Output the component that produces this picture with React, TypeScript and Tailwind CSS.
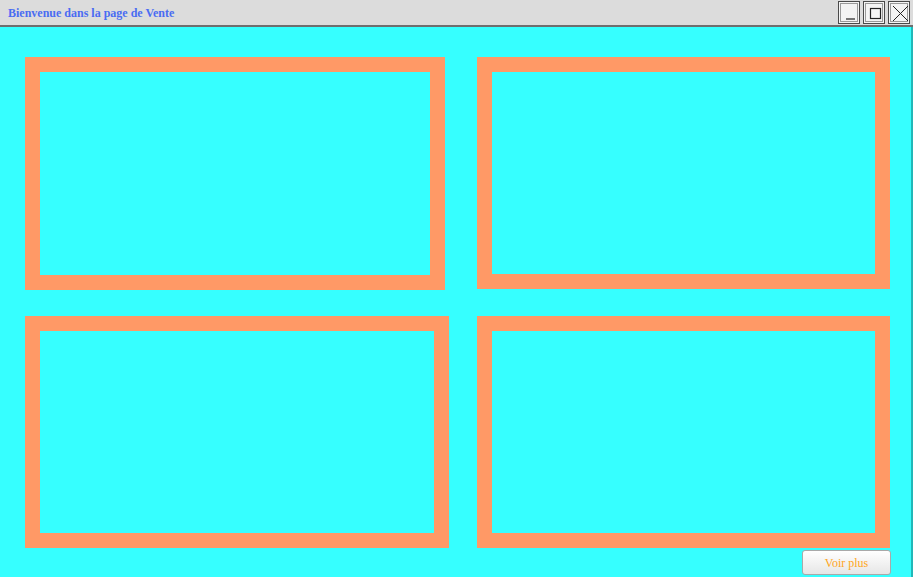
// Page de vente - fenêtre avec quatre cadres
export default function App() {
  const serif = { fontFamily: '"Liberation Serif", "Times New Roman", serif' };

  return (
    <div className="w-[913px] h-[577px] overflow-hidden bg-[#36ffff] flex flex-col" style={serif}>
      {/* barre de titre */}
      <header className="h-[27px] shrink-0 bg-[#dcdcdc] border-b-2 border-[#6e6e6e] flex items-center justify-between pl-2 pr-[3px]">
        <span className="text-[12px] font-bold text-[#4a6cf2] leading-none">Bienvenue dans la page de Vente</span>
        <div className="flex gap-[3px] self-start mt-[1px]">
          <WinButton>
            <path d="M6 16 H15" stroke="#222" strokeWidth="1.2" />
          </WinButton>
          <WinButton>
            <rect x="5.5" y="5.5" width="10" height="10" fill="none" stroke="#222" strokeWidth="1.2" />
          </WinButton>
          <WinButton>
            <path d="M3 3 L18 18 M18 3 L3 18" stroke="#222" strokeWidth="1" />
          </WinButton>
        </div>
      </header>

      {/* contenu */}
      <main className="flex-1 flex flex-col pt-[30px] pl-[25px] border-r-2 border-[#22b8b8]">
        <div className="flex">
          <Cadre className="w-[420px] h-[233px]" />
          <Cadre className="w-[413px] h-[232px] ml-[32px]" />
        </div>
        <div className="flex mt-[26px]">
          <Cadre className="w-[424px] h-[232px]" />
          <Cadre className="w-[413px] h-[232px] ml-[28px]" />
        </div>
        <div className="flex justify-end mt-[2px] pr-[20px]">
          <button
            className="w-[89px] h-[25px] rounded-[3px] border border-[#a9a9a9] bg-gradient-to-b from-white to-[#e6e6e6] text-[12px] text-[#ffa51c]"
            style={serif}
          >
            Voir plus
          </button>
        </div>
      </main>
    </div>
  );
}

function Cadre({ className }: { className: string }) {
  return <div className={"border-[15px] border-[#ff9966] " + className} />;
}

function WinButton({ children }: { children: React.ReactNode }) {
  return (
    <div className="w-[22px] h-[23px] border border-[#4a4a4a] bg-[#f4f4f4] p-[1px]">
      <div className="w-full h-full border border-[#9a9a9a]">
        <svg width="20" height="21" viewBox="0 0 20 21" className="-m-[1px]">
          {children}
        </svg>
      </div>
    </div>
  );
}
